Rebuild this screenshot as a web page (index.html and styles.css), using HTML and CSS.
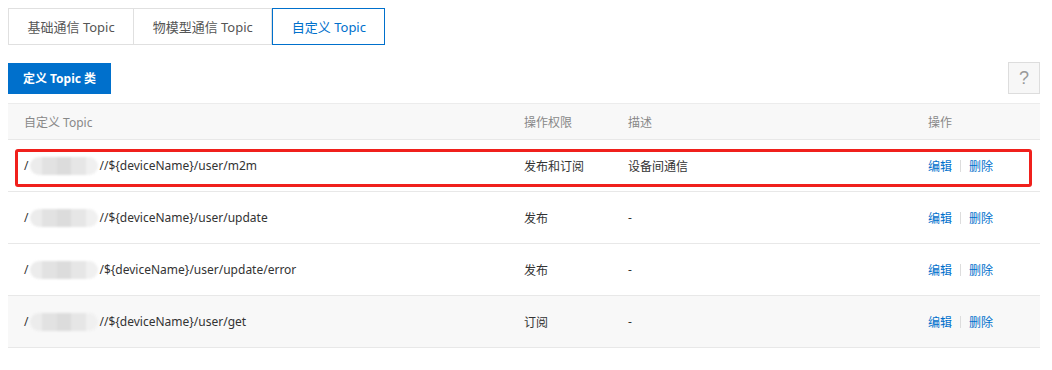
FILE: index.html
```html
<!DOCTYPE html>
<html lang="zh-CN">

<head>
    <meta charset="UTF-8">
    <title>自定义 Topic</title>
    <link rel="stylesheet" href="styles.css">
</head>

<body>
    <div class="tabs">
        <div class="tab">基础通信 Topic</div>
        <div class="tab">物模型通信 Topic</div>
        <div class="tab active">自定义 Topic</div>
    </div>

    <div class="toolbar">
        <button class="primary">定义 Topic 类</button>
        <button class="help">?</button>
    </div>

    <div class="grid">
        <div class="row head">
            <div class="cell">自定义 Topic</div>
            <div class="cell">操作权限</div>
            <div class="cell">描述</div>
            <div class="cell">操作</div>
        </div>
        <div class="row marked">
            <div class="cell">/<span class="blur"></span>//${deviceName}/user/m2m</div>
            <div class="cell">发布和订阅</div>
            <div class="cell">设备间通信</div>
            <div class="cell actions"><a>编辑</a><i></i><a>删除</a></div>
        </div>
        <div class="row">
            <div class="cell">/<span class="blur"></span>//${deviceName}/user/update</div>
            <div class="cell">发布</div>
            <div class="cell">-</div>
            <div class="cell actions"><a>编辑</a><i></i><a>删除</a></div>
        </div>
        <div class="row">
            <div class="cell">/<span class="blur"></span>/${deviceName}/user/update/error</div>
            <div class="cell">发布</div>
            <div class="cell">-</div>
            <div class="cell actions"><a>编辑</a><i></i><a>删除</a></div>
        </div>
        <div class="row hover">
            <div class="cell">/<span class="blur"></span>//${deviceName}/user/get</div>
            <div class="cell">订阅</div>
            <div class="cell">-</div>
            <div class="cell actions"><a>编辑</a><i></i><a>删除</a></div>
        </div>
    </div>
</body>

</html>
```

FILE: styles.css
```css
body {
    margin: 0;
    padding: 8px 12px 8px 8px;
    font-family: "Noto Sans", "Noto Sans CJK SC", sans-serif;
    font-size: 12px;
    color: #333;
    background-color: #fff;
}

.tabs {
    display: flex;
}

.tab {
    height: 37px;
    line-height: 36px;
    box-sizing: border-box;
    padding: 0 18.5px;
    font-size: 13px;
    color: #555;
    border: 1px solid #e0e0e0;
    border-left: none;
}

.tab:first-child {
    border-left: 1px solid #e0e0e0;
}

.tab.active {
    color: #0070cc;
    border: 1px solid #0070cc;
}

.toolbar {
    display: flex;
    justify-content: space-between;
    align-items: center;
    margin-top: 17px;
}

.primary {
    height: 31px;
    width: 103px;
    border: none;
    background-color: #0070cc;
    color: #fff;
    font-family: inherit;
    font-size: 12px;
    font-weight: bold;
}

.help {
    width: 32px;
    height: 32px;
    border: 1px solid #ddd;
    background-color: #f7f7f7;
    color: #999;
    font-family: "Liberation Sans", sans-serif;
    font-size: 18px;
    padding: 0;
}

.grid {
    margin-top: 9px;
}

.row {
    display: grid;
    grid-template-columns: 500px 104px 300px 1fr;
    height: 52px;
    align-items: center;
    border-bottom: 1px solid #e8e8e8;
    box-sizing: border-box;
    position: relative;
}

.row.head {
    height: 37px;
    background-color: #f8f8f8;
    border-top: 1px solid #ececec;
    color: #888;
}

.row.hover {
    background-color: #f8f8f8;
}

.cell {
    padding-left: 16px;
    white-space: nowrap;
    display: flex;
    align-items: center;
}

.blur {
    display: inline-block;
    width: 68px;
    height: 18px;
    margin: 0 1px 0 2px;
    border-radius: 9px;
    background:
        linear-gradient(90deg, #ececec 0 18%, #e2e2e2 18% 40%, #dcdcdc 40% 60%, #e6e6e6 60% 82%, #f0f0f0 82%);
    filter: blur(1px);
}

.actions a {
    color: #0070cc;
}

.actions i {
    display: inline-block;
    width: 1px;
    height: 12px;
    background-color: #ddd;
    margin: 0 8px;
}

.marked::after {
    content: "";
    position: absolute;
    left: 7px;
    right: 8px;
    top: 9px;
    bottom: 4px;
    border: 3px solid #f0201c;
    border-radius: 3px;
}
```
